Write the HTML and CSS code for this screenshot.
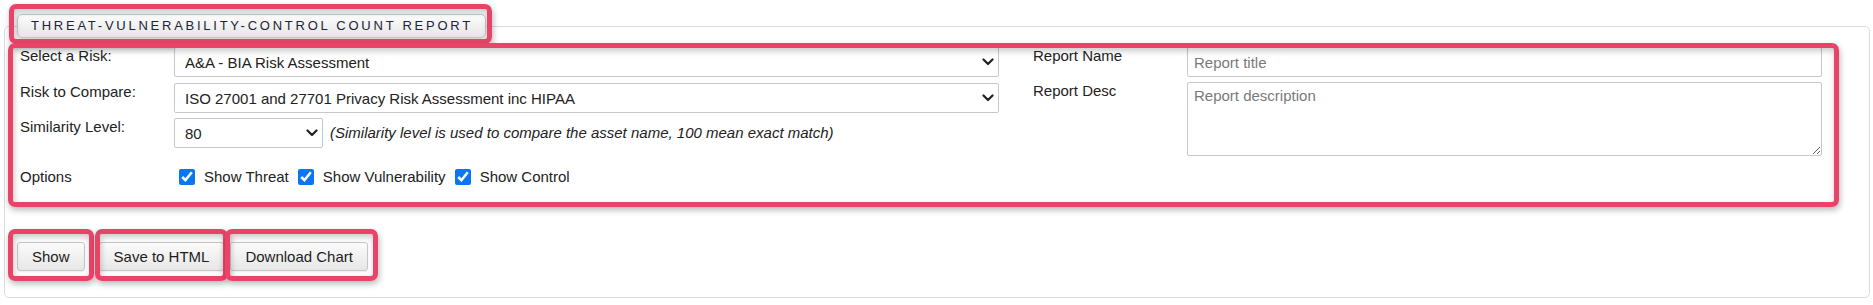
FILE: index.html
```html
<!DOCTYPE html>
<html lang="en">
<head>
<meta charset="utf-8">
<title>Threat-Vulnerability-Control Count Report</title>
<link rel="stylesheet" href="styles.css">
</head>
<body>
<div class="page">
  <fieldset class="report">
    <legend class="report-title hl hl-legend">THREAT-VULNERABILITY-CONTROL COUNT REPORT</legend>

    <div class="form hl hl-form">
      <div class="col col-left">
        <div class="row">
          <label class="lbl">Select a Risk:</label>
          <div class="select-wrap wide">
            <select class="sel"><option>A&amp;A - BIA Risk Assessment</option></select>
            <svg class="chev" viewBox="0 0 12 8" width="12" height="8"><polyline points="1.5,1.5 6,6 10.5,1.5" fill="none" stroke="#222" stroke-width="2.2" stroke-linecap="round" stroke-linejoin="round"/></svg>
          </div>
        </div>
        <div class="row row-2">
          <label class="lbl">Risk to Compare:</label>
          <div class="select-wrap wide">
            <select class="sel"><option>ISO 27001 and 27701 Privacy Risk Assessment inc HIPAA</option></select>
            <svg class="chev" viewBox="0 0 12 8" width="12" height="8"><polyline points="1.5,1.5 6,6 10.5,1.5" fill="none" stroke="#222" stroke-width="2.2" stroke-linecap="round" stroke-linejoin="round"/></svg>
          </div>
        </div>
        <div class="row row-3">
          <label class="lbl">Similarity Level:</label>
          <div class="select-wrap narrow">
            <select class="sel"><option>80</option></select>
            <svg class="chev" viewBox="0 0 12 8" width="12" height="8"><polyline points="1.5,1.5 6,6 10.5,1.5" fill="none" stroke="#222" stroke-width="2.2" stroke-linecap="round" stroke-linejoin="round"/></svg>
          </div>
          <span class="hint">(Similarity level is used to compare the asset name, 100 mean exact match)</span>
        </div>
        <div class="row row-opts">
          <span class="lbl">Options</span>
          <div class="checks">
            <label class="chk"><input type="checkbox" checked>Show Threat</label>
            <label class="chk"><input type="checkbox" checked>Show Vulnerability</label>
            <label class="chk"><input type="checkbox" checked>Show Control</label>
          </div>
        </div>
      </div>

      <div class="col col-right">
        <div class="row">
          <label class="lbl">Report Name</label>
          <input class="txt" type="text" placeholder="Report title">
        </div>
        <div class="row row-desc">
          <label class="lbl">Report Desc</label>
          <textarea class="area" placeholder="Report description"></textarea>
        </div>
      </div>
    </div>

    <div class="actions">
      <span class="hl hl-show"><button class="btn" type="button">Show</button></span>
      <span class="hl hl-save"><button class="btn" type="button">Save to HTML</button></span>
      <span class="hl hl-chart"><button class="btn" type="button">Download Chart</button></span>
    </div>
  </fieldset>
</div>
</body>
</html>
```

FILE: styles.css
```css
* { box-sizing: border-box; }

html, body {
  margin: 0;
  padding: 0;
  background: #fff;
}

body {
  font-family: "Liberation Sans", Arial, sans-serif;
  font-size: 15px;
  color: #222;
}

.page {
  padding: 14px 3px 5px 4px;
}

.report {
  margin: 0;
  border: 1px solid #dcdcdc;
  border-radius: 5px;
  padding: 9px 15px 26px 15px;
}

/* legend styled as a raised tab */
.report-title {
  margin-left: -3px;
  padding: 0 12px 0 13px;
  height: 24px;
  line-height: 22px;
  font-size: 13px;
  letter-spacing: 2.75px;
  color: #1d2438;
  border: 1px solid #c9c9c9;
  border-radius: 5px;
  background: linear-gradient(#fdfdfd, #e6e6e6);
  box-shadow: 0 1px 4px rgba(0, 0, 0, 0.22);
}

/* red highlight annotations */
.hl { position: relative; }
.hl::after {
  content: "";
  position: absolute;
  border: 5px solid #e94368;
  border-radius: 7px;
  box-shadow: 1px 3px 6px rgba(0, 0, 0, 0.28), inset 1px 3px 6px rgba(0, 0, 0, 0.22);
  pointer-events: none;
}
.hl-legend::after { top: -11px; left: -9px; right: -7px; bottom: -7px; }
.hl-form::after { top: -4px; left: -12px; right: -17px; bottom: -18px; }
.hl-show::after { top: -13px; bottom: -10px; left: -9px; right: -9px; }
.hl-save::after { top: -13px; bottom: -10px; left: -4px; right: -4px; }
.hl-chart::after { top: -13px; bottom: -10px; left: -5px; right: -10px; }

/* form layout */
.form {
  display: flex;
  gap: 34px;
  width: max-content;
}

.col { display: flex; flex-direction: column; }
.col-left { width: 979px; }
.col-right { width: 789px; }

.row {
  display: flex;
  align-items: flex-start;
}
.row-2 { margin-top: 6px; }
.row-3 { margin-top: 5px; align-items: center; }
.row-3 .lbl { align-self: flex-start; }
.row-desc { margin-top: 5px; }
.row-opts { margin-top: 17px; height: 24px; align-items: center; }

.lbl {
  flex: 0 0 154px;
  line-height: 18px;
}

.select-wrap { position: relative; }
.select-wrap.wide { width: 825px; }
.select-wrap.narrow { width: 149px; }

.sel {
  appearance: none;
  -webkit-appearance: none;
  display: block;
  width: 100%;
  height: 30px;
  margin: 0;
  padding: 0 30px 0 10px;
  font: inherit;
  color: #222;
  background: #fff;
  border: 1px solid #c8c8c8;
  border-radius: 2px;
}

.chev {
  position: absolute;
  right: 5px;
  top: 11px;
  pointer-events: none;
}

.hint {
  margin-left: 7px;
  font-style: italic;
  line-height: 18px;
}

.checks {
  display: flex;
  align-items: center;
  gap: 9px;
  padding-left: 5px;
}

.chk {
  display: flex;
  align-items: center;
  gap: 9px;
  line-height: 18px;
}

.chk input {
  width: 16px;
  height: 16px;
  margin: 0;
  accent-color: #0b76f0;
}

.txt, .area {
  width: 635px;
  margin: 0;
  font: inherit;
  color: #222;
  border: 1px solid #c8c8c8;
  border-radius: 2px;
  background: #fff;
}

.txt {
  height: 30px;
  padding: 0 6px;
}

.area {
  height: 74px;
  padding: 4px 6px;
  resize: both;
  display: block;
}

.txt::placeholder, .area::placeholder { color: #7a7a7a; }

/* buttons */
.actions {
  display: flex;
  align-items: center;
  margin-top: 53px;
  margin-left: -3px;
}

.hl-show { margin-right: 14px; }
.hl-save { margin-right: 6px; }

.btn {
  display: block;
  height: 29px;
  padding: 0 14px;
  font: inherit;
  color: #1d1d1d;
  border: 1px solid #c6c6c6;
  border-radius: 3px;
  background: linear-gradient(#fbfbfb, #e7e7e7);
  box-shadow: 0 1px 2px rgba(0, 0, 0, 0.08);
}
```
